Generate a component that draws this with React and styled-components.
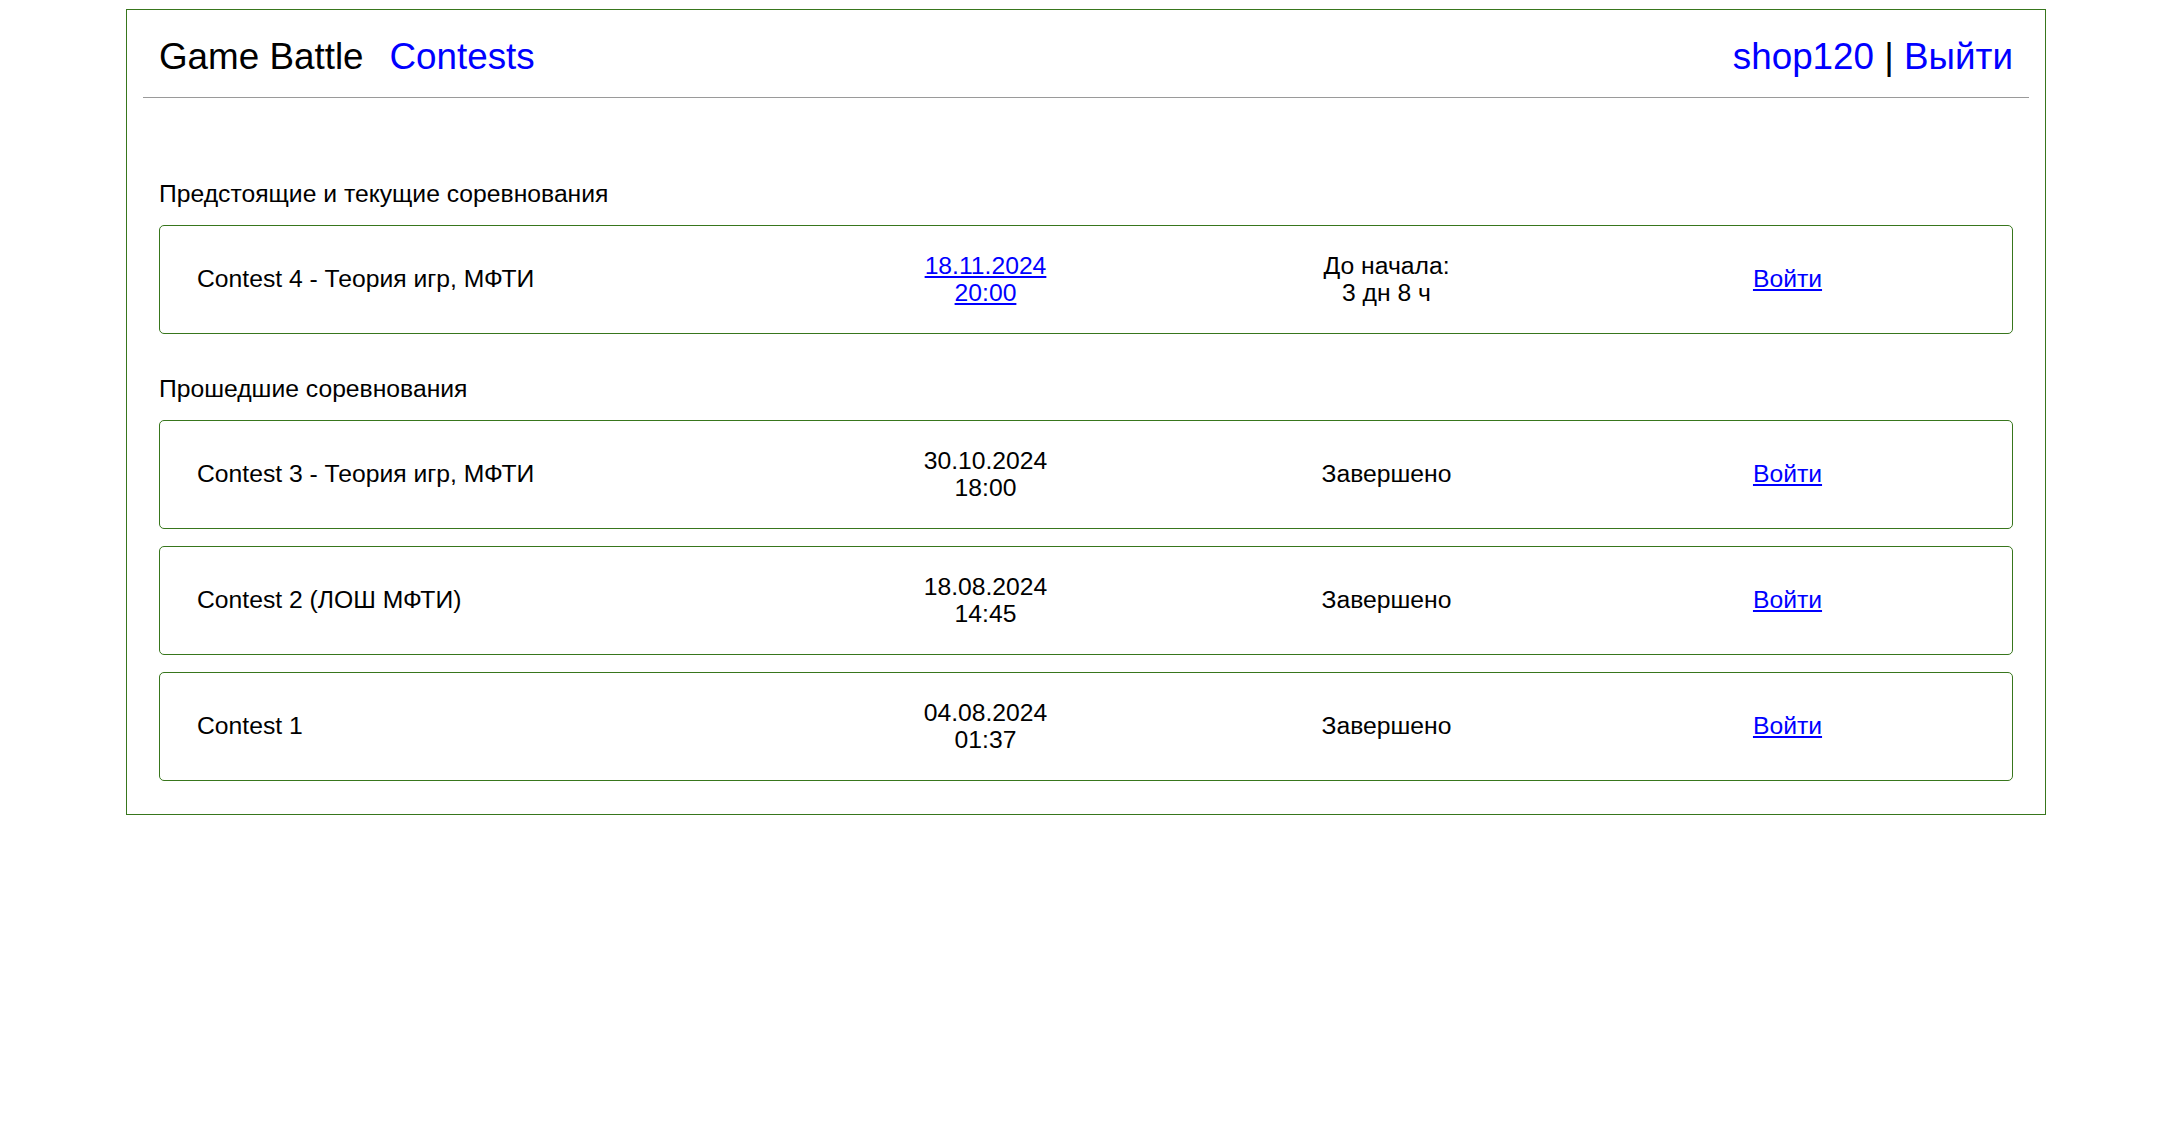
import React from "react";
import styled, { createGlobalStyle } from "styled-components";

const GlobalStyle = createGlobalStyle`
  html, body {
    margin: 0;
    padding: 0;
    background: #ffffff;
    font-family: "Liberation Sans", Arial, sans-serif;
    color: #000;
  }
`;

const GREEN = "#38761d";
const BLUE = "#0000ff";

const Page = styled.div`
  padding: 9px 0 0 126px;
`;

const Frame = styled.div`
  width: 1920px;
  box-sizing: border-box;
  border: 1px solid ${GREEN};
  padding: 16px 16px 0;
`;

const Header = styled.header`
  display: flex;
  align-items: center;
  justify-content: space-between;
  padding: 11px 16px 20px;
  border-bottom: 1px solid #9a9a9a;
  font-size: 36.8px;
  line-height: 40px;
`;

const Brand = styled.div`
  display: flex;
  align-items: baseline;
  gap: 26px;
`;

const Title = styled.span`
  color: #000;
`;

const NavLink = styled.a`
  color: ${BLUE};
  text-decoration: none;
  cursor: pointer;
`;

const UserBox = styled.div`
  display: flex;
  align-items: baseline;
  white-space: pre;
`;

const Sep = styled.span`
  color: #000;
`;

const Main = styled.main`
  display: flex;
  flex-direction: column;
  gap: 41.5px;
  padding: 82px 16px 33px;
`;

const Section = styled.section`
  display: flex;
  flex-direction: column;
`;

const SectionTitle = styled.h2`
  margin: 0 0 17px;
  font-size: 24.7px;
  font-weight: 400;
  line-height: 27.5px;
`;

const List = styled.div`
  display: flex;
  flex-direction: column;
  gap: 17px;
`;

const Card = styled.div`
  display: grid;
  grid-template-columns: 1fr repeat(3, 401px);
  align-items: center;
  border: 1px solid ${GREEN};
  border-radius: 5px;
  padding: 26px 24px 26px 37px;
  font-size: 24.7px;
  line-height: 27.5px;
`;

const Name = styled.div`
  text-align: left;
`;

const Cell = styled.div`
  display: flex;
  flex-direction: column;
  align-items: center;
  text-align: center;
`;

const Link = styled.a`
  color: ${BLUE};
  text-decoration: underline;
  cursor: pointer;
`;

const DateLink = styled(Link)`
  display: flex;
  flex-direction: column;
  align-items: center;
`;

const upcoming = [
  {
    name: "Contest 4 - Теория игр, МФТИ",
    date: "18.11.2024",
    time: "20:00",
    status: ["До начала:", "3 дн 8 ч"],
    linkDate: true,
  },
];

const past = [
  { name: "Contest 3 - Теория игр, МФТИ", date: "30.10.2024", time: "18:00", status: ["Завершено"] },
  { name: "Contest 2 (ЛОШ МФТИ)", date: "18.08.2024", time: "14:45", status: ["Завершено"] },
  { name: "Contest 1", date: "04.08.2024", time: "01:37", status: ["Завершено"] },
];

function ContestCard({ c }) {
  return (
    <Card>
      <Name>{c.name}</Name>
      <Cell>
        {c.linkDate ? (
          <DateLink>
            <span>{c.date}</span>
            <span>{c.time}</span>
          </DateLink>
        ) : (
          <>
            <span>{c.date}</span>
            <span>{c.time}</span>
          </>
        )}
      </Cell>
      <Cell>
        {c.status.map((s) => (
          <span key={s}>{s}</span>
        ))}
      </Cell>
      <Cell>
        <Link>Войти</Link>
      </Cell>
    </Card>
  );
}

export default function App() {
  return (
    <>
      <GlobalStyle />
      <Page>
        <Frame>
          <Header>
            <Brand>
              <Title>Game Battle</Title>
              <NavLink>Contests</NavLink>
            </Brand>
            <UserBox>
              <NavLink>shop120</NavLink>
              <Sep> | </Sep>
              <NavLink>Выйти</NavLink>
            </UserBox>
          </Header>
          <Main>
            <Section>
              <SectionTitle>Предстоящие и текущие соревнования</SectionTitle>
              <List>
                {upcoming.map((c) => (
                  <ContestCard key={c.name} c={c} />
                ))}
              </List>
            </Section>
            <Section>
              <SectionTitle>Прошедшие соревнования</SectionTitle>
              <List>
                {past.map((c) => (
                  <ContestCard key={c.name} c={c} />
                ))}
              </List>
            </Section>
          </Main>
        </Frame>
      </Page>
    </>
  );
}
